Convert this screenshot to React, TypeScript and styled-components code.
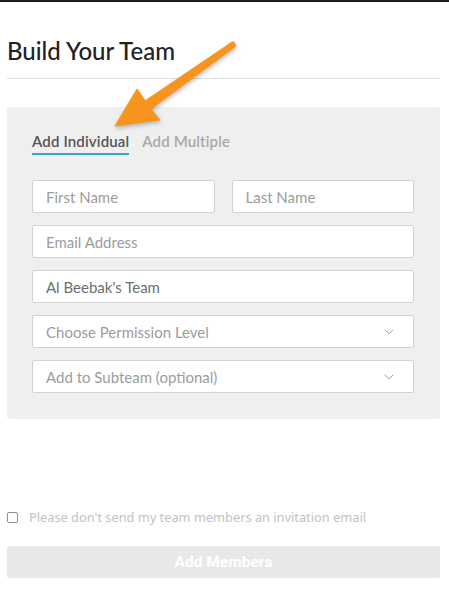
import React from "react";
import styled, { createGlobalStyle } from "styled-components";

const Global = createGlobalStyle`
  html, body { margin: 0; padding: 0; background: #fff; }
  body { font-family: Lato, "Noto Sans", sans-serif; }
  * { box-sizing: border-box; }
`;

const Page = styled.div`
  position: relative;
  width: 449px;
  min-height: 598px;
  border-top: 2px solid #1e1e1e;
  padding: 0 9px 0 7px;
  margin-right: 4px;
`;

const Title = styled.h1`
  margin: 34px 0 0;
  font-family: Lato, sans-serif;
  font-weight: 500;
  font-size: 24px;
  line-height: 29px;
  color: #222;
`;

const Rule = styled.hr`
  margin: 13px 0 0;
  border: 0;
  border-top: 1px solid #dedede;
  height: 0;
`;

const Panel = styled.section`
  margin-top: 28px;
  background: #efefef;
  border-radius: 3px;
  padding: 25px 26px 26px 25px;
`;

const Tabs = styled.div`
  display: flex;
  gap: 13px;
  margin-bottom: 25px;
`;

const Tab = styled.div<{ $active?: boolean }>`
  font-family: Lato, sans-serif;
  font-size: 15px;
  line-height: 18px;
  font-weight: 600;
  letter-spacing: 0.15px;
  color: ${(p) => (p.$active ? "#555" : "#a8a8a8")};
  padding-bottom: 3px;
  border-bottom: 2px solid ${(p) => (p.$active ? "#3ba6c2" : "transparent")};
`;

const Fields = styled.div`
  display: flex;
  flex-direction: column;
  gap: 12px;
`;

const Row = styled.div`
  display: grid;
  grid-template-columns: 1fr 1fr;
  gap: 17px;
`;

const Input = styled.input`
  display: block;
  width: 100%;
  height: 33px;
  border: 1px solid #d2d2d2;
  border-radius: 2px;
  background: #fff;
  padding: 0 13px;
  font-family: Lato, sans-serif;
  font-size: 15px;
  color: #6e6e6e;
  outline: none;
  &::placeholder { color: #9c9c9c; }
`;

const Select = styled.div`
  display: flex;
  align-items: center;
  justify-content: space-between;
  height: 33px;
  border: 1px solid #d2d2d2;
  border-radius: 2px;
  background: #fff;
  padding: 0 19px 0 13px;
  font-family: Lato, sans-serif;
  font-size: 15px;
  color: #9c9c9c;
`;

const Chevron = () => (
  <svg width="10" height="6" viewBox="0 0 10 6" fill="none">
    <path d="M0.8 0.8 L5 4.8 L9.2 0.8" stroke="#9a9a9a" strokeWidth="1" />
  </svg>
);

const CheckRow = styled.label`
  display: flex;
  align-items: center;
  gap: 11px;
  margin-top: 89px;
  font-family: "Noto Sans", sans-serif;
  font-size: 12.8px;
  line-height: 18px;
  color: #c2c2c2;
`;

const Box = styled.span`
  width: 11px;
  height: 11px;
  border: 1px solid #8e8e8e;
  border-radius: 2px;
  background: #fff;
  flex: none;
`;

const Button = styled.button`
  display: block;
  width: 100%;
  height: 32px;
  margin-top: 20px;
  border: 0;
  border-radius: 2px;
  background: #e8e8e8;
  color: #fff;
  font-family: Roboto, sans-serif;
  font-weight: 700;
  font-size: 15.5px;
`;

const ArrowLayer = styled.svg`
  position: absolute;
  left: 0;
  top: 0;
  pointer-events: none;
  filter: drop-shadow(1px 2px 2px rgba(0, 0, 0, 0.25));
`;

export default function App() {
  return (
    <>
      <Global />
      <Page>
        <Title>Build Your Team</Title>
        <Rule />
        <Panel>
          <Tabs>
            <Tab $active>Add Individual</Tab>
            <Tab>Add Multiple</Tab>
          </Tabs>
          <Fields>
            <Row>
              <Input placeholder="First Name" />
              <Input placeholder="Last Name" />
            </Row>
            <Input placeholder="Email Address" />
            <Input defaultValue="Al Beebak's Team" />
            <Select>
              <span>Choose Permission Level</span>
              <Chevron />
            </Select>
            <Select>
              <span>Add to Subteam (optional)</span>
              <Chevron />
            </Select>
          </Fields>
        </Panel>
        <CheckRow>
          <Box />
          <span>Please don't send my team members an invitation email</span>
        </CheckRow>
        <Button>Add Members</Button>
        <ArrowLayer width="260" height="140" viewBox="0 0 260 140">
          <path
            d="M232.4 39.8 Q235.6 40.2 235.6 44.2 L150.9 107.1 L160 118 L115 124 L137 87 L145.1 98.9 Z"
            fill="#f7941d"
            strokeLinejoin="round"
            stroke="#f7941d"
            strokeWidth="1"
          />
        </ArrowLayer>
      </Page>
    </>
  );
}
